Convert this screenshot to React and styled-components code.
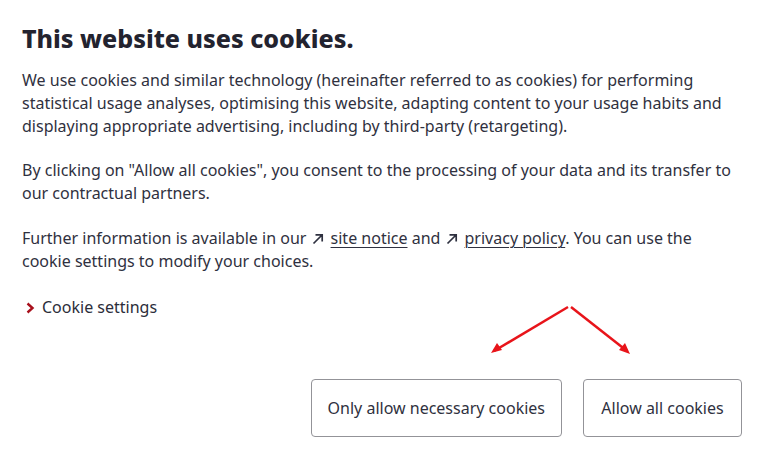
import React from "react";
import styled, { createGlobalStyle } from "styled-components";

const Global = createGlobalStyle`
  html, body { margin: 0; padding: 0; background: #fff; }
  body { font-family: "Noto Sans", "Open Sans", sans-serif; color: #2b2d3a; }
`;

const Page = styled.div`
  position: relative;
  width: 772px;
  height: 458px;
  box-sizing: border-box;
  padding: 20px 30px 0 22px;
  display: flex;
  flex-direction: column;
`;

const Title = styled.h1`
  margin: 0 0 13px;
  font-size: 25px;
  line-height: 36px;
  font-weight: 800;
  color: #23232f;
  letter-spacing: 0;
`;

const Para = styled.p`
  margin: 0 0 ${(p) => p.$gap ?? 21}px;
  font-size: 16px;
  line-height: 23px;
  color: #2f3140;
`;

const ExtIcon = styled.svg`
  width: 12px;
  height: 12px;
  margin: 0 7px 0 1px;
  vertical-align: -1px;
`;

const Ext = () => (
  <ExtIcon viewBox="0 0 12 12">
    <path d="M1.5 10.5 L10 2 M3.5 1.8 H10.2 V8.5" fill="none" stroke="#2f3140" strokeWidth="1.7" />
  </ExtIcon>
);

const Link = styled.a`
  color: inherit;
  text-decoration: underline;
  text-underline-offset: 3px;
  text-decoration-thickness: 1px;
`;

const Settings = styled.div`
  display: flex;
  align-items: center;
  gap: 7px;
  font-size: 16px;
  line-height: 23px;
  margin-top: 2px;
`;

const Chevron = styled.svg`
  width: 10px;
  height: 12px;
  margin-left: 3px;
`;

const Actions = styled.div`
  margin-top: auto;
  margin-bottom: 21px;
  display: flex;
  justify-content: flex-end;
  gap: 21px;
`;

const Button = styled.button`
  height: 58px;
  padding: 0 16px;
  border: 1px solid #939398;
  border-radius: 4px;
  background: #fff;
  font-family: "Noto Sans", sans-serif;
  font-size: 16px;
  color: #2f3140;
  min-width: ${(p) => p.$min || 0}px;
`;

const Arrows = styled.svg`
  position: absolute;
  left: 0;
  top: 0;
  pointer-events: none;
`;

export default function App() {
  return (
    <>
      <Global />
      <Page>
        <Title>This website uses cookies.</Title>
        <Para>
          We use cookies and similar technology (hereinafter referred to as cookies) for performing
          statistical usage analyses, optimising this website, adapting content to your usage habits and
          displaying appropriate advertising, including by third-party (retargeting).
        </Para>
        <Para $gap={22}>
          By clicking on "Allow all cookies", you consent to the processing of your data and its transfer to
          our contractual partners.
        </Para>
        <Para>
          Further information is available in our <Ext /><Link>site notice</Link> and <Ext />
          <Link>privacy policy</Link>. You can use the cookie settings to modify your choices.
        </Para>
        <Settings>
          <Chevron viewBox="0 0 10 12">
            <path d="M2.5 1.5 L7.5 6 L2.5 10.5" fill="none" stroke="#a8101c" strokeWidth="2.4" />
          </Chevron>
          Cookie settings
        </Settings>
        <Actions>
          <Button $min={251}>Only allow necessary cookies</Button>
          <Button $min={159}>Allow all cookies</Button>
        </Actions>
        <Arrows width="772" height="458" viewBox="0 0 772 458">
          <line x1="568" y1="307" x2="494" y2="351" stroke="#e8141a" strokeWidth="2.5" />
          <path d="M491 353 L497 343 L502 350 Z" fill="#e8141a" />
          <line x1="571" y1="307" x2="627" y2="351" stroke="#e8141a" strokeWidth="2.5" />
          <path d="M630 354 L619 350 L625 343 Z" fill="#e8141a" />
        </Arrows>
      </Page>
    </>
  );
}
